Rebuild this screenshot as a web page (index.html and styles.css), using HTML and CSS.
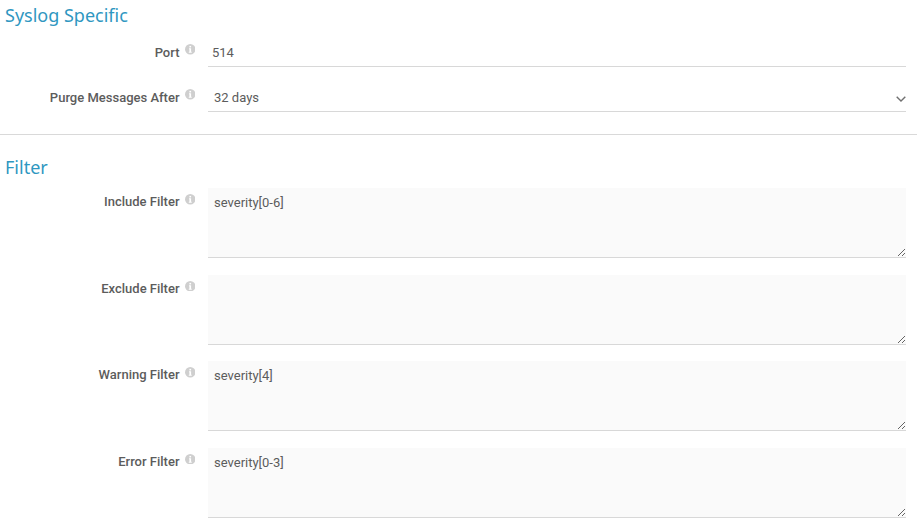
FILE: index.html
```html
<!DOCTYPE html>
<html>
<head>
    <title>Syslog Settings</title>
    <link rel="stylesheet" href="styles.css">
</head>
<body>
    <div class="section first">
        <h2>Syslog Specific</h2>
        <div class="form-row short">
            <label for="port">Port <svg class="info" viewBox="0 0 10 10"><circle cx="5" cy="5" r="5"/><rect x="4.2" y="1.8" width="1.6" height="1.5"/><path d="M3.8 4.1h2v3.3h.6v.9H3.6v-.9h.6V5h-.4z"/></svg></label>
            <div class="field"><input type="text" id="port" value="514"></div>
        </div>
        <div class="form-row short">
            <label for="purge">Purge Messages After <svg class="info" viewBox="0 0 10 10"><circle cx="5" cy="5" r="5"/><rect x="4.2" y="1.8" width="1.6" height="1.5"/><path d="M3.8 4.1h2v3.3h.6v.9H3.6v-.9h.6V5h-.4z"/></svg></label>
            <div class="field select-wrap">
                <select id="purge">
                    <option>32 days</option>
                </select>
                <svg class="chevron" viewBox="0 0 10 6"><path d="M.7 .8L5 5l4.3-4.2"/></svg>
            </div>
        </div>
    </div>

    <hr>

    <div class="section">
        <h2>Filter</h2>
        <div class="form-row tall">
            <label for="include">Include Filter <svg class="info" viewBox="0 0 10 10"><circle cx="5" cy="5" r="5"/><rect x="4.2" y="1.8" width="1.6" height="1.5"/><path d="M3.8 4.1h2v3.3h.6v.9H3.6v-.9h.6V5h-.4z"/></svg></label>
            <div class="field"><textarea id="include">severity[0-6]</textarea></div>
        </div>
        <div class="form-row tall">
            <label for="exclude">Exclude Filter <svg class="info" viewBox="0 0 10 10"><circle cx="5" cy="5" r="5"/><rect x="4.2" y="1.8" width="1.6" height="1.5"/><path d="M3.8 4.1h2v3.3h.6v.9H3.6v-.9h.6V5h-.4z"/></svg></label>
            <div class="field"><textarea id="exclude"></textarea></div>
        </div>
        <div class="form-row tall">
            <label for="warning">Warning Filter <svg class="info" viewBox="0 0 10 10"><circle cx="5" cy="5" r="5"/><rect x="4.2" y="1.8" width="1.6" height="1.5"/><path d="M3.8 4.1h2v3.3h.6v.9H3.6v-.9h.6V5h-.4z"/></svg></label>
            <div class="field"><textarea id="warning">severity[4]</textarea></div>
        </div>
        <div class="form-row tall">
            <label for="error">Error Filter <svg class="info" viewBox="0 0 10 10"><circle cx="5" cy="5" r="5"/><rect x="4.2" y="1.8" width="1.6" height="1.5"/><path d="M3.8 4.1h2v3.3h.6v.9H3.6v-.9h.6V5h-.4z"/></svg></label>
            <div class="field"><textarea id="error">severity[0-3]</textarea></div>
        </div>
    </div>
</body>
</html>
```

FILE: styles.css
```css
body {
    font-family: Roboto, Arial, sans-serif;
    font-size: 13px;
    color: #555;
    margin: 0;
    background: #fff;
    overflow: hidden;
}

h2 {
    font-family: "Noto Sans", sans-serif;
    font-size: 18px;
    line-height: 24px;
    font-weight: 400;
    color: #2f97c1;
    margin: 0 0 9px;
    padding-left: 5px;
}

.section {
    padding-top: 20px;
}

.section.first {
    padding-top: 3px;
}

.first h2 {
    margin-bottom: 11px;
}

hr {
    border: 0;
    border-top: 1px solid #d9d9d9;
    margin: 22px 0 0;
}

.form-row {
    display: grid;
    grid-template-columns: 179.5px 1fr;
    column-gap: 28.5px;
    padding-right: 11px;
}

.form-row.short {
    height: 29px;
    margin-bottom: 16px;
}

.form-row.tall {
    height: 70px;
    margin-bottom: 16.5px;
}

label {
    text-align: right;
    font-weight: 500;
    color: #5c5c5c;
    line-height: 16px;
    white-space: nowrap;
    position: relative;
}

.short label {
    padding-top: 7px;
}

.tall label {
    padding-top: 6px;
}

.info {
    width: 10.5px;
    height: 10.5px;
    fill: #cfcfcf;
    position: absolute;
    left: 184.5px;
    top: 6px;
}

.info rect, .info path {
    fill: #fff;
}

.field {
    position: relative;
    min-width: 0;
}

input, select, textarea {
    display: block;
    width: 100%;
    box-sizing: border-box;
    font-family: Roboto, Arial, sans-serif;
    font-size: 13px;
    color: #5c5c5c;
    border: 0;
    border-bottom: 1px solid #d8d8d8;
    border-radius: 0;
    outline: none;
    background: #fff;
}

input, select {
    height: 29px;
    padding: 1px 4px 0;
}

select {
    appearance: none;
    padding-left: 6px;
}

textarea {
    height: 70px;
    padding: 7px 6px;
    background: #fafafa;
    line-height: 16px;
}

.chevron {
    position: absolute;
    right: 0;
    top: 13px;
    width: 10px;
    height: 6px;
    fill: none;
    stroke: #707070;
    stroke-width: 1.4;
}
```
